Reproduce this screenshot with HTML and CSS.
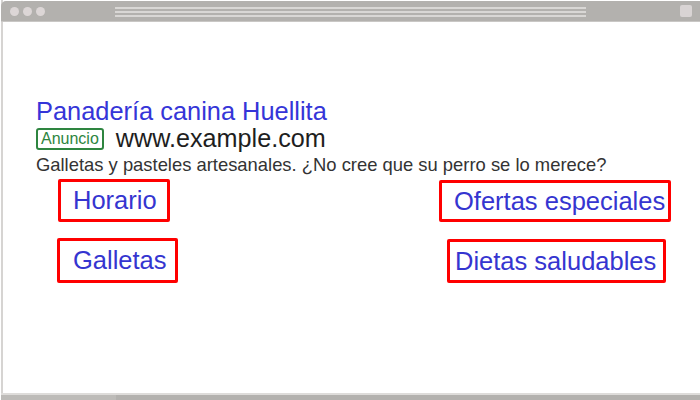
FILE: index.html
```html
<!DOCTYPE html>
<html lang="es">
<head>
    <meta charset="UTF-8">
    <meta name="viewport" content="width=device-width, initial-scale=1.0">
    <title>Anuncio de ejemplo</title>
    <link rel="stylesheet" href="styles.css">
</head>
<body>
    <div class="window">
        <div class="titlebar">
            <div class="dots">
                <span class="dot"></span>
                <span class="dot"></span>
                <span class="dot"></span>
            </div>
            <div class="address">
                <span></span>
                <span></span>
                <span></span>
            </div>
            <div class="menu-btn"></div>
        </div>

        <div class="page">
            <div class="ad">
                <a class="ad-title" href="#">Panadería canina Huellita</a>
                <div class="ad-url">
                    <span class="badge">Anuncio</span>
                    <span>www.example.com</span>
                </div>
                <p class="ad-desc">Galletas y pasteles artesanales. ¿No cree que su perro se lo merece?</p>

                <div class="sitelinks">
                    <a class="sitelink sl-horario" href="#">Horario</a>
                    <a class="sitelink sl-ofertas" href="#">Ofertas especiales</a>
                    <a class="sitelink sl-galletas" href="#">Galletas</a>
                    <a class="sitelink sl-dietas" href="#">Dietas saludables</a>
                </div>
            </div>
        </div>

        <div class="statusbar"><span class="status-tab"></span></div>
    </div>
</body>
</html>
```

FILE: styles.css
```css
html, body {
    margin: 0;
    height: 100%;
    background: #fff;
}
body {
    font-family: "Liberation Sans", Arial, sans-serif;
}
.window {
    height: 400px;
    display: flex;
    flex-direction: column;
    border-left: 2px solid #d6d4d2;
    margin-left: 1px;
    box-sizing: border-box;
}

/* browser chrome */
.titlebar {
    height: 20px;
    margin-top: 1px;
    margin-left: -2px;
    background: #b3b1ae;
    border-top-left-radius: 5px;
    display: flex;
    align-items: center;
    border-bottom: 1px solid #c9c7c5;
}
.dots {
    display: flex;
    gap: 4px;
    padding-left: 9px;
    width: 114px;
    align-self: stretch;
    align-items: center;
    box-sizing: border-box;
}
.dot {
    width: 9px;
    height: 9px;
    border-radius: 50%;
    background: #dcd6d6;
}
.address {
    width: 471px;
    display: flex;
    flex-direction: column;
    gap: 2px;
    padding-top: 1px;
}
.address span {
    height: 2px;
    background: #d9d7d5;
}
.menu-btn {
    width: 12px;
    height: 12px;
    margin-left: auto;
    margin-right: 8px;
    border-radius: 2px;
    background: #d9d4d4;
}
.statusbar {
    height: 5px;
    background: #b3b1ae;
    border-top: 2px solid #dedcda;
    margin-left: -2px;
}
.status-tab {
    display: block;
    width: 115px;
    height: 5px;
    background: #bdbbb8;
}

/* ad */
.page {
    flex: 1;
}
.ad {
    padding: 76px 0 0 33px;
}
.ad-title {
    display: block;
    color: #3535d8;
    font-size: 25.4px;
    line-height: 27px;
    text-decoration: none;
}
.ad-url {
    display: flex;
    align-items: center;
    gap: 12px;
    font-size: 25.2px;
    line-height: 27px;
    color: #1e1e1e;
}
.badge {
    font-size: 16px;
    line-height: 18px;
    color: #2e8540;
    border: 2px solid #2e8540;
    border-radius: 3px;
    padding: 0 3px;
}
.ad-desc {
    margin: 2px 0 0;
    font-size: 18.4px;
    line-height: 22px;
    color: #333;
}
.sitelinks {
    display: grid;
    grid-template-columns: 300px 1fr;
    row-gap: 16px;
    margin-top: 3px;
    margin-left: 22px;
}
.sitelink {
    justify-self: start;
    font-size: 25.5px;
    line-height: 36px;
    color: #3535d0;
    text-decoration: none;
    border: 3px solid #f00;
    border-radius: 2px;
}
.sl-horario { padding: 0 10px 0 12px; }
.sl-galletas { padding: 1px 8px 1px 13px; margin-left: -1px; }
.sl-ofertas { padding: 0 3px 0 12px; margin-left: 81px; margin-top: 1px; height: 36px; }
.sl-dietas { padding: 1px 7px 1px 5px; margin-left: 89px; margin-top: 1px; }
```
